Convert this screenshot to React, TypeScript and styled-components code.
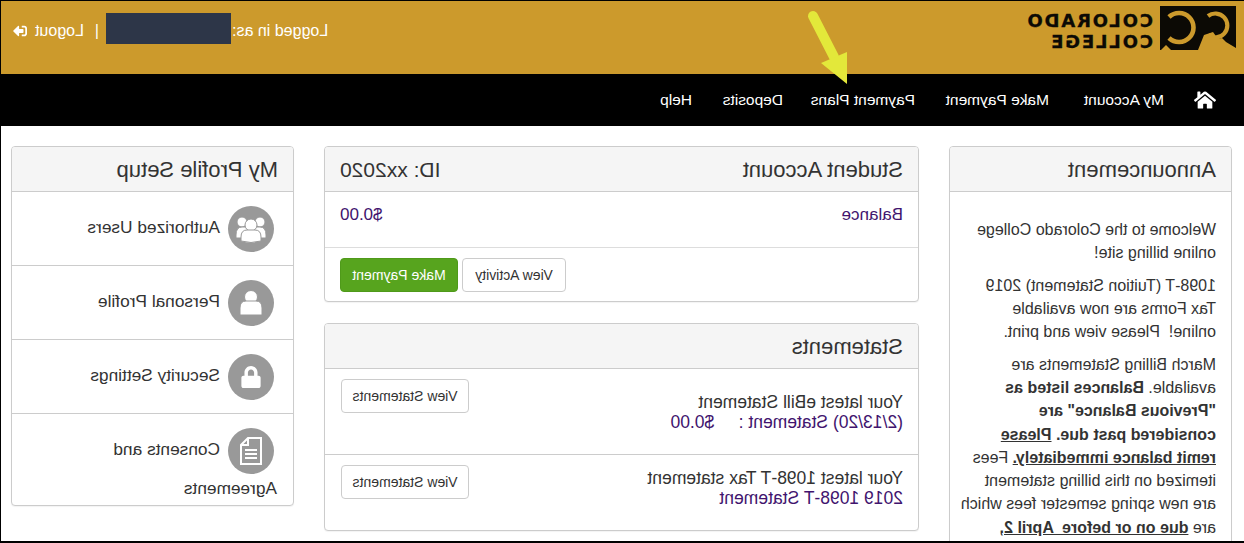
import * as React from 'react';
import styled, { createGlobalStyle } from 'styled-components';
import { FaHome, FaLock, FaSignOutAlt } from 'react-icons/fa';

const GlobalStyle = createGlobalStyle`
    html, body {
        margin: 0;
        padding: 0;
        background: #fff;
    }
`;

// the reference is a horizontally flipped page, so the whole stage is mirrored
const Stage = styled.div`
    position: relative;
    width: 1244px;
    height: 543px;
    box-sizing: border-box;
    overflow: hidden;
    transform: scaleX(-1);
    border-top: 1px solid #000;
    border-right: 1px solid #000;
    border-bottom: 2px solid #000;
    background: #fff;
    color: #333;
    font-family: 'Liberation Sans', Arial, sans-serif;
    font-size: 16px;
`;

const Header = styled.header`
    display: flex;
    align-items: flex-start;
    height: 73px;
    box-sizing: border-box;
    padding: 5px 12px 0 8px;
    background: #cc9a2c;
`;

const Logo = styled.div`
    display: flex;
    gap: 7px;
`;

const LogoWords = styled.div`
    padding-top: 4px;
    color: #0c0a05;
    font-family: 'DejaVu Sans', sans-serif;
    font-size: 18px;
    font-weight: 700;
    line-height: 21px;
    letter-spacing: 1.85px;
    -webkit-text-stroke: 0.3px #0c0a05;
`;

const UserBar = styled.div`
    display: flex;
    align-items: flex-start;
    margin: 7px 0 0 auto;
    color: #fff;
    line-height: 36px;
`;

const Redacted = styled.span`
    width: 125px;
    height: 31px;
    margin: 0 7px 0 1px;
    background: #2d3648;
`;

const Divider = styled.span`
    margin-right: 11px;
`;

const LogoutLink = styled.span`
    display: flex;
    align-items: center;
    gap: 8px;
`;

const Nav = styled.nav`
    display: flex;
    align-items: center;
    gap: 30px;
    height: 52px;
    padding-left: 28px;
    background: #000;
    color: #fff;
    font-size: 15.5px;
`;

const NavItem = styled.span<{ $width: number }>`
    width: ${(props) => props.$width}px;
    white-space: nowrap;
`;

const Columns = styled.main`
    display: grid;
    grid-template-columns: 283px 595px 283px;
    column-gap: 30px;
    align-items: start;
    padding: 20px 0 0 12px;
`;

const Stack = styled.div`
    display: flex;
    flex-direction: column;
    gap: 21px;
`;

const Panel = styled.section`
    border: 1px solid #ccc;
    border-radius: 4px;
    box-shadow: 0 1px 1px rgba(0, 0, 0, 0.05);
    background: #fff;
`;

const PanelHeading = styled.div`
    display: flex;
    justify-content: space-between;
    align-items: center;
    height: 45px;
    box-sizing: border-box;
    padding: 2px 15px 0;
    border-bottom: 1px solid #ccc;
    border-radius: 3px 3px 0 0;
    background: #f5f5f5;
    font-size: 22px;
`;

const AccountId = styled.span`
    font-size: 21px;
`;

const Notice = styled.div`
    padding: 26px 8px 0 15px;
    line-height: 23.3px;
    white-space: nowrap;
`;

const Para = styled.p`
    margin: 0 0 9.1px;
`;

const BalanceRow = styled.div`
    display: flex;
    justify-content: space-between;
    height: 56px;
    box-sizing: border-box;
    padding: 13px 15px 0;
    border-bottom: 1px solid #ddd;
    color: #41146e;
    font-size: 17px;
    line-height: 20px;
`;

const Actions = styled.div`
    display: flex;
    justify-content: flex-end;
    gap: 4px;
    padding: 10px 15px 9px;
`;

const Button = styled.button<{ $primary?: boolean; $width: number }>`
    width: ${(props) => props.$width}px;
    height: 34px;
    padding: 0;
    border: 1px solid ${(props) => (props.$primary ? '#4f9a1a' : '#ccc')};
    border-radius: 4px;
    background: ${(props) => (props.$primary ? '#57a41e' : '#fff')};
    color: ${(props) => (props.$primary ? '#fff' : '#333')};
    font-family: inherit;
    font-size: 14px;
`;

const StatementRow = styled.div<{ $height: number; $textTop: number; $last?: boolean }>`
    display: flex;
    justify-content: space-between;
    align-items: flex-start;
    height: ${(props) => props.$height}px;
    box-sizing: border-box;
    padding: 10px 16px 0 15px;
    border-bottom: ${(props) => (props.$last ? 'none' : '1px solid #ccc')};
    font-size: 17.5px;

    & > div {
        margin-top: ${(props) => props.$textTop}px;
        line-height: 20px;
    }
`;

const Link = styled.div`
    color: #41146e;
    white-space: pre;
`;

const ProfileRow = styled.div<{ $last?: boolean }>`
    padding: 12px 16px 0;
    height: ${(props) => (props.$last ? 91 : 74)}px;
    box-sizing: border-box;
    border-bottom: ${(props) => (props.$last ? 'none' : '1px solid #ccc')};
    font-size: 17.3px;
    line-height: 28px;
`;

const IconCircle = styled.span`
    display: inline-flex;
    align-items: center;
    justify-content: center;
    width: 46px;
    height: 46px;
    margin: 2px 8px 0 3px;
    border-radius: 50%;
    background: #999;
    color: #fff;
    vertical-align: middle;
`;

const ArrowLayer = styled.svg`
    position: absolute;
    top: 4px;
    left: 380px;
`;

const CollegeMark = () => (
    <svg width="76" height="44" viewBox="0 0 76 44">
        <rect width="76" height="44" fill="#0c0a05" />
        <path d="M28 10 A12 12 0 1 0 28 29" fill="none" stroke="#cc9a2c" strokeWidth="4.2" />
        <path d="M67 11 A14.5 14.5 0 1 0 67 32" fill="none" stroke="#cc9a2c" strokeWidth="4.6" />
        <polygon points="0,42 10,36 14,32 18,33 23,26 32,29 38,44 0,44" fill="#cc9a2c" />
        <polygon points="65,44 70,39 75,44" fill="#cc9a2c" />
    </svg>
);

const UsersIcon = () => (
    <svg width="32" height="30" viewBox="0 0 32 30" fill="#fff" stroke="#999" strokeWidth="1">
        <circle cx="7" cy="8" r="5" />
        <circle cx="25" cy="8" r="5" />
        <path d="M1 21 Q1 13 7 13 H25 Q31 13 31 21 V24 H1 Z" />
        <circle cx="16" cy="11" r="6" />
        <path d="M6 27 V23 Q6 16 12 16 H20 Q26 16 26 23 V27 Q16 30 6 27 Z" />
    </svg>
);

const UserIcon = () => (
    <svg width="24" height="26" viewBox="0 0 24 26" fill="#fff" stroke="#999" strokeWidth="1">
        <circle cx="12" cy="7" r="6.5" />
        <path d="M1 25 V18 Q1 11 7 11 H17 Q23 11 23 18 V25 Z" />
    </svg>
);

const DocumentIcon = () => (
    <svg width="24" height="30" viewBox="0 0 24 30" fill="none" stroke="#fff" strokeWidth="2">
        <path d="M2 2 H15 L22 9 V28 H2 Z" />
        <path d="M15 2 V9 H22" />
        <path d="M6 14 H18 M6 18 H18 M6 22 H18" strokeWidth="2.2" />
    </svg>
);

const App = () => (
    <Stage>
        <GlobalStyle />
        <Header>
            <Logo>
                <CollegeMark />
                <LogoWords>
                    COLORADO
                    <br />
                    COLLEGE
                </LogoWords>
            </Logo>
            <UserBar>
                Logged in as:
                <Redacted />
                <Divider>|</Divider>
                <LogoutLink>
                    Logout <FaSignOutAlt size={14} />
                </LogoutLink>
            </UserBar>
        </Header>
        <Nav>
            <FaHome size={22} />
            <NavItem $width={85}>My Account</NavItem>
            <NavItem $width={104}>Make Payment</NavItem>
            <NavItem $width={102}>Payment Plans</NavItem>
            <NavItem $width={61}>Deposits</NavItem>
            <NavItem $width={34}>Help</NavItem>
        </Nav>
        <Columns>
            <Panel>
                <PanelHeading>Announcement</PanelHeading>
                <Notice>
                    <Para>
                        Welcome to the Colorado College
                        <br />
                        online billing site!
                    </Para>
                    <Para>
                        1098-T (Tuition Statement) 2019
                        <br />
                        Tax Forms are now available
                        <br />
                        online!&nbsp; Please view and print.
                    </Para>
                    <Para>
                        March Billing Statements are
                        <br />
                        available. <b>Balances listed as</b>
                        <br />
                        <b>"Previous Balance" are</b>
                        <br />
                        <b>
                            considered past due. <u>Please</u>
                        </b>
                        <br />
                        <b>
                            <u>remit balance immediately.</u>
                        </b>{' '}
                        Fees
                        <br />
                        itemized on this billing statement
                        <br />
                        are new spring semester fees which
                        <br />
                        are{' '}
                        <b>
                            <u>due on or before&nbsp; April 2,</u>
                        </b>
                    </Para>
                </Notice>
            </Panel>
            <Stack>
                <Panel>
                    <PanelHeading>
                        <span>Student Account</span>
                        <AccountId>ID: xx2020</AccountId>
                    </PanelHeading>
                    <BalanceRow>
                        <span>Balance</span>
                        <span>$0.00</span>
                    </BalanceRow>
                    <Actions>
                        <Button $width={104}>View Activity</Button>
                        <Button $primary $width={118}>
                            Make Payment
                        </Button>
                    </Actions>
                </Panel>
                <Panel>
                    <PanelHeading>Statements</PanelHeading>
                    <StatementRow $height={86} $textTop={13}>
                        <div>
                            Your latest eBill Statement
                            <Link>(2/13/20) Statement :     $0.00</Link>
                        </div>
                        <Button $width={128}>View Statements</Button>
                    </StatementRow>
                    <StatementRow $height={75} $textTop={3} $last>
                        <div>
                            Your latest 1098-T Tax statement
                            <Link>2019 1098-T Statement</Link>
                        </div>
                        <Button $width={128}>View Statements</Button>
                    </StatementRow>
                </Panel>
            </Stack>
            <Panel>
                <PanelHeading>My Profile Setup</PanelHeading>
                <ProfileRow>
                    <IconCircle>
                        <UsersIcon />
                    </IconCircle>
                    Authorized Users
                </ProfileRow>
                <ProfileRow>
                    <IconCircle>
                        <UserIcon />
                    </IconCircle>
                    Personal Profile
                </ProfileRow>
                <ProfileRow>
                    <IconCircle>
                        <FaLock size={22} />
                    </IconCircle>
                    Security Settings
                </ProfileRow>
                <ProfileRow $last>
                    <IconCircle>
                        <DocumentIcon />
                    </IconCircle>
                    Consents and
                    <br />
                    Agreements
                </ProfileRow>
            </Panel>
        </Columns>
        <ArrowLayer width="70" height="85" viewBox="0 0 70 85">
            <path d="M51 11 L30 52" stroke="#e3e83a" strokeWidth="10" strokeLinecap="round" />
            <polygon points="43,58 17,47 17,79" fill="#e3e83a" />
        </ArrowLayer>
    </Stage>
);

export default App;
